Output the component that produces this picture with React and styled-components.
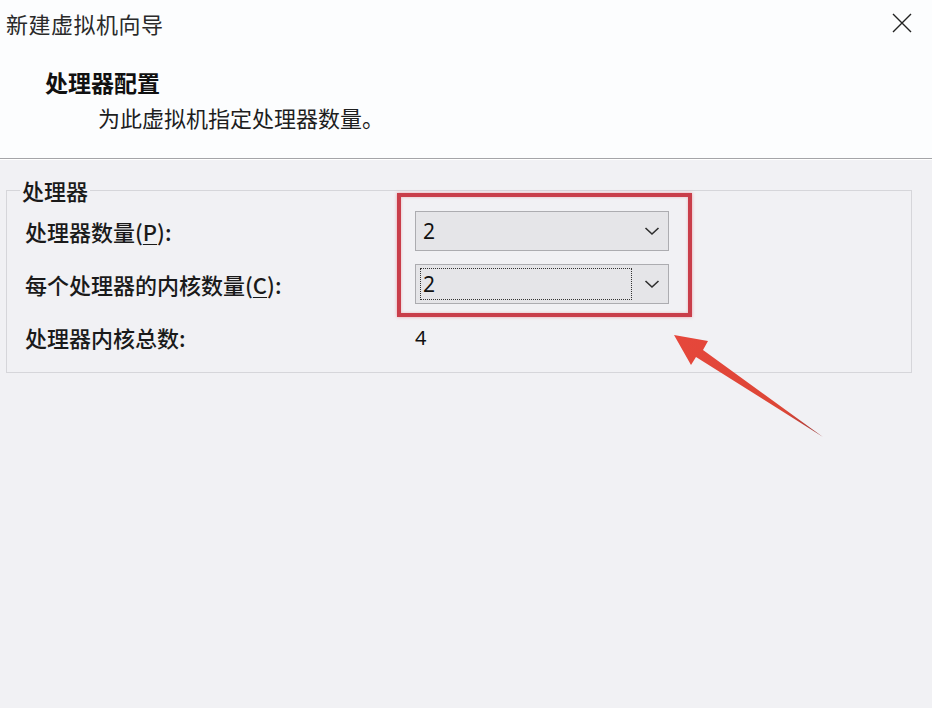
import React from "react";
import styled, { createGlobalStyle } from "styled-components";

const GlobalStyle = createGlobalStyle`
  html, body {
    margin: 0;
    padding: 0;
    background: #f1f1f4;
  }
  body {
    font-family: "Noto Sans CJK SC", "Noto Sans", "Liberation Sans", sans-serif;
    color: #1a1a1a;
  }
`;

const Window = styled.div`
  position: relative;
  width: 932px;
  height: 708px;
  display: flex;
  flex-direction: column;
  background: #f1f1f4;
  overflow: hidden;
`;

const Top = styled.div`
  background: #fcfdfe;
  border-bottom: 1px solid #a4a4a8;
  box-shadow: 0 1px 0 #ffffff;
`;

const TitleBar = styled.div`
  height: 46px;
  display: flex;
  align-items: center;
  justify-content: space-between;
  padding: 0 18px 0 6px;
`;

const TitleText = styled.div`
  font-size: 22px;
  line-height: 24px;
  color: #2a2a2a;
  letter-spacing: 0.5px;
`;

const CloseButton = styled.div`
  width: 24px;
  height: 24px;
  display: flex;
  align-items: center;
  justify-content: center;
`;

const Header = styled.div`
  display: flex;
  flex-direction: column;
  gap: 7px;
  padding: 22px 0 27px 45px;
`;

const HeadTitle = styled.div`
  font-size: 23px;
  line-height: 28px;
  font-weight: 700;
  color: #111;
`;

const HeadSub = styled.div`
  font-size: 22px;
  line-height: 28px;
  padding-left: 53px;
  color: #1e1e1e;
`;

const Body = styled.div`
  flex: 1;
  padding: 19px 20px 0 6px;
`;

const Group = styled.fieldset`
  margin: 0;
  width: 906px;
  box-sizing: border-box;
  border: 1px solid #d6d6da;
  padding: 0 13px 15px 13px;
`;

const Legend = styled.legend`
  padding: 0 2px;
  font-size: 22px;
  line-height: 24px;
  font-weight: 500;
  color: #1a1a1a;
`;

const Rows = styled.div`
  display: grid;
  grid-template-columns: 390px 254px;
  grid-auto-rows: 40px;
  row-gap: 13px;
  padding: 9px 0 0 5px;
  align-items: center;
`;

const Label = styled.div`
  font-size: 22px;
  line-height: 26px;
  font-weight: 500;
  color: #1a1a1a;

  u {
    text-decoration-thickness: 1px;
    text-underline-offset: 3px;
  }
`;

const Select = styled.div`
  height: 40px;
  box-sizing: border-box;
  border: 1px solid #acacb0;
  background: #e5e5e8;
  display: flex;
  align-items: center;
  padding: 3px 8px 3px 4px;
`;

const SelectValue = styled.div`
  flex: 1;
  align-self: stretch;
  display: flex;
  align-items: center;
  padding-left: 2px;
  margin-right: 12px;
  font-family: "Noto Sans", "Liberation Sans", sans-serif;
  font-size: 21px;
  color: #111;
  border: 1px dotted ${(p) => (p.$focused ? "#333" : "transparent")};
`;

const Value = styled.div`
  font-family: "Noto Sans", "Liberation Sans", sans-serif;
  font-size: 20px;
  color: #111;
`;

const Highlight = styled.div`
  position: absolute;
  left: 397px;
  top: 193px;
  width: 295px;
  height: 124px;
  box-sizing: border-box;
  border: 4px solid #c93e4a;
  box-shadow: 0 0 3px rgba(230, 90, 100, 0.55), inset 0 0 3px rgba(230, 90, 100, 0.4);
  pointer-events: none;
`;

const ArrowLayer = styled.svg`
  position: absolute;
  left: 0;
  top: 0;
  pointer-events: none;
`;

const Chevron = () => (
  <svg width="16" height="10" viewBox="0 0 16 10">
    <path d="M1.5 2 L8 8 L14.5 2" fill="none" stroke="#2e2e2e" strokeWidth="1.6" />
  </svg>
);

function Combo({ value, focused }) {
  return (
    <Select>
      <SelectValue $focused={focused}>{value}</SelectValue>
      <Chevron />
    </Select>
  );
}

export default function App() {
  return (
    <>
      <GlobalStyle />
      <Window>
        <Top>
          <TitleBar>
            <TitleText>新建虚拟机向导</TitleText>
            <CloseButton>
              <svg width="20" height="20" viewBox="0 0 20 20">
                <path d="M1 1 L19 19 M19 1 L1 19" stroke="#222" strokeWidth="1.4" />
              </svg>
            </CloseButton>
          </TitleBar>
          <Header>
            <HeadTitle>处理器配置</HeadTitle>
            <HeadSub>为此虚拟机指定处理器数量。</HeadSub>
          </Header>
        </Top>
        <Body>
          <Group>
            <Legend>处理器</Legend>
            <Rows>
              <Label>
                处理器数量(<u>P</u>):
              </Label>
              <Combo value="2" />
              <Label>
                每个处理器的内核数量(<u>C</u>):
              </Label>
              <Combo value="2" focused />
              <Label>处理器内核总数:</Label>
              <Value>4</Value>
            </Rows>
          </Group>
        </Body>
        <Highlight />
        <ArrowLayer width="932" height="708" viewBox="0 0 932 708">
          <defs>
            <linearGradient id="arrowFill" x1="675" y1="336" x2="823" y2="437" gradientUnits="userSpaceOnUse">
              <stop offset="0" stopColor="#e6473b" />
              <stop offset="0.75" stopColor="#dc4636" />
              <stop offset="1" stopColor="#9a3a3a" />
            </linearGradient>
          </defs>
          <polygon
            points="674,335 708,341 703,350 823,437 696,357 691,365"
            fill="url(#arrowFill)"
          />
        </ArrowLayer>
      </Window>
    </>
  );
}
